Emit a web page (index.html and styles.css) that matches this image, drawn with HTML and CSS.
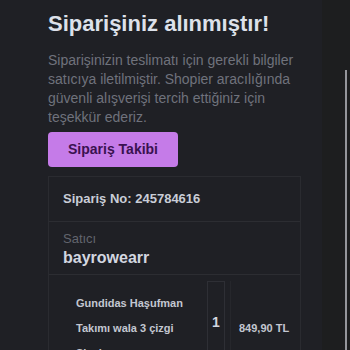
FILE: index.html
```html
<!DOCTYPE html>
<html lang="tr">

<head>
  <meta charset="utf-8">
  <link rel="stylesheet" href="styles.css">
</head>

<body>
  <div class="content">
    <h1 class="title">Siparişiniz alınmıştır!</h1>
    <p class="lead">Siparişinizin teslimatı için gerekli bilgiler satıcıya iletilmiştir. Shopier aracılığında güvenli alışverişi tercih ettiğiniz için teşekkür ederiz.</p>
    <button class="track-button" type="button">Sipariş Takibi</button>

    <div class="order-card">
      <div class="order-no">Sipariş No: 245784616</div>
      <div class="seller">
        <div class="seller-label">Satıcı</div>
        <div class="seller-name">bayrowearr</div>
      </div>
      <div class="items">
        <div class="item-name">Gundidas Haşufman Takımı wala 3 çizgi Siyah</div>
        <div class="item-qty">1</div>
        <div class="item-price">849,90 TL</div>
      </div>
    </div>
  </div>
  <div class="scrollbar"></div>
</body>

</html>
```
FILE: styles.css
```css
body {
  margin: 0;
  padding: 11px 0 0 48px;
  height: 350px;
  box-sizing: border-box;
  overflow: hidden;
  font-family: 'Liberation Sans', Arial, sans-serif;
  background: linear-gradient(to right, #1f2025 322px, #1d1e1f 322px);
}

.content {
  width: 254px;
}

.title {
  margin: 0;
  font-size: 22px;
  line-height: 26px;
  font-weight: bold;
  color: #dde1ea;
}

.lead {
  margin: 14px 0 0;
  font-size: 14px;
  line-height: 19px;
  color: #6f727c;
}

.track-button {
  display: block;
  margin-top: 5px;
  padding: 9px 20px;
  border: none;
  border-radius: 4px;
  background-color: #c57be8;
  color: #3a1250;
  font-family: inherit;
  font-size: 14px;
  line-height: 17px;
  font-weight: bold;
  cursor: pointer;
}

.order-card {
  margin-top: 9px;
  width: 253px;
  border: 1px solid #2a2b30;
  border-bottom: none;
  box-sizing: border-box;
}

.order-no {
  padding: 14px 14px 15px;
  font-size: 13px;
  line-height: 15px;
  font-weight: bold;
  color: #c9cdd7;
  border-bottom: 1px solid #2c2d32;
}

.seller {
  padding: 9px 14px 7px;
  border-bottom: 1px solid #2c2d32;
}

.seller-label {
  font-size: 13px;
  line-height: 15px;
  color: #62656e;
}

.seller-name {
  margin-top: 2px;
  font-size: 16px;
  line-height: 19px;
  font-weight: bold;
  color: #d3d7e0;
}

.items {
  display: flex;
  padding: 6px 0 0 27px;
}

.item-name {
  width: 131px;
  padding: 10px 14px 0 0;
  box-sizing: border-box;
  font-size: 11px;
  line-height: 25px;
  font-weight: bold;
  color: #c3c7d1;
}

.item-qty {
  width: 18px;
  padding-top: 32px;
  border: 1px solid #2e2f35;
  border-bottom: none;
  box-sizing: border-box;
  text-align: center;
  font-size: 14px;
  line-height: 16px;
  font-weight: bold;
  color: #d3d7e0;
}

.item-price {
  padding: 41px 0 0 8px;
  border-left: 1px solid #26272c;
  margin-left: 5px;
  font-size: 11px;
  line-height: 13px;
  font-weight: bold;
  color: #c3c7d1;
}

.scrollbar {
  position: fixed;
  top: 70px;
  right: 3px;
  width: 2px;
  height: 290px;
  background-color: #95969b;
}
```
